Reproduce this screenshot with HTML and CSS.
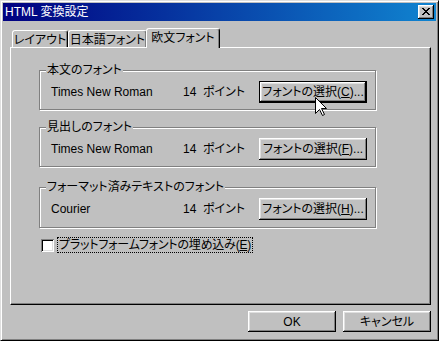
FILE: index.html
```html
<!DOCTYPE html>
<html lang="ja">
<head>
    <meta charset="UTF-8">
    <title>HTML 変換設定</title>
    <link rel="stylesheet" href="styles.css">
</head>
<body>
    <div class="window">
        <div class="titlebar">
            <span class="title">HTML 変換設定</span>
            <button class="close">
                <svg width="8" height="7" viewBox="0 0 8 7" shape-rendering="crispEdges"><path d="M0 0h2v1H0zM6 0h2v1H6zM1 1h2v1H1zM5 1h2v1H5zM2 2h4v1H2zM3 3h2v1H3zM2 4h4v1H2zM1 5h2v1H1zM5 5h2v1H5zM0 6h2v1H0zM6 6h2v1H6z" fill="#000"/></svg>
            </button>
        </div>

        <div class="content">
            <div class="tabs">
                <div class="tab tab-layout">レイアウト</div>
                <div class="tab tab-jp">日本語フォント</div>
                <div class="tab tab-en active">欧文フォント</div>
            </div>

            <div class="panel">
                <div class="group">
                    <span class="legend">本文のフォント</span>
                    <div class="row">
                        <span class="name">Times New Roman</span>
                        <span class="size">14</span>
                        <span class="unit">ポイント</span>
                        <button class="btn select default">フォントの選択(<u>C</u>)...</button>
                    </div>
                </div>

                <div class="group group-2">
                    <span class="legend">見出しのフォント</span>
                    <div class="row">
                        <span class="name">Times New Roman</span>
                        <span class="size">14</span>
                        <span class="unit">ポイント</span>
                        <button class="btn select">フォントの選択(<u>F</u>)...</button>
                    </div>
                </div>

                <div class="group group-3">
                    <span class="legend">フォーマット済みテキストのフォント</span>
                    <div class="row">
                        <span class="name">Courier</span>
                        <span class="size">14</span>
                        <span class="unit">ポイント</span>
                        <button class="btn select">フォントの選択(<u>H</u>)...</button>
                    </div>
                </div>

                <div class="check">
                    <span class="box"></span>
                    <span class="check-label">プラットフォームフォントの埋め込み(<u>E</u>)</span>
                </div>
            </div>

            <div class="actions">
                <button class="btn action">OK</button>
                <button class="btn action">キャンセル</button>
            </div>
        </div>

        <svg class="cursor" width="13" height="20" viewBox="0 0 13 20">
            <path d="M0.5 0.5V16.5L4.5 12.5L7.5 18.5L9.5 17.5L6.5 11.5H11.5Z" fill="#fff" stroke="#000" stroke-width="1"/>
        </svg>
    </div>
</body>
</html>
```

FILE: styles.css
```css
* {
    box-sizing: border-box;
}
body {
    margin: 0;
    background-color: #c0c0c0;
    font-family: "Liberation Sans", "Noto Sans CJK JP", sans-serif;
    font-size: 12px;
    font-feature-settings: "palt";
    color: #000;
}
button {
    font: inherit;
    color: inherit;
    padding: 0;
    border: none;
    background-color: #c0c0c0;
}
.window {
    position: relative;
    width: 439px;
    height: 341px;
    padding: 2px;
    border: 1px solid;
    border-color: #dfdfdf #000 #000 #dfdfdf;
    box-shadow: inset 1px 1px #fff, inset -1px -1px #808080;
    background-color: #c0c0c0;
}
.titlebar {
    height: 18px;
    display: flex;
    align-items: center;
    justify-content: space-between;
    padding: 0 2px 0 2px;
    background: linear-gradient(to right, #000080, #1084d0);
    color: #fff;
}
.title {
    line-height: 14px;
}
.close {
    width: 16px;
    height: 14px;
    display: flex;
    align-items: center;
    justify-content: center;
    padding-bottom: 1px;
    box-shadow: inset -1px -1px #000, inset 1px 1px #fff, inset -2px -2px #808080, inset 2px 2px #dfdfdf;
}
.content {
    padding: 7px 5px 0 7px;
}
.tabs {
    height: 19px;
    display: flex;
    align-items: flex-end;
    padding-left: 2px;
}
.tab {
    height: 17px;
    display: flex;
    align-items: center;
    justify-content: center;
    line-height: 14px;
    padding-top: 2px;
    border: 1px solid;
    border-bottom: none;
    border-color: #fff #000 transparent #fff;
    border-radius: 3px 3px 0 0;
    box-shadow: inset -1px 0 #808080;
    background-color: #c0c0c0;
}
.tab-layout {
    width: 56px;
}
.tab-jp {
    width: 79px;
}
.tab-en {
    width: 74px;
}
.tab.active {
    position: relative;
    z-index: 1;
    height: 20px;
    margin: 0 -2px -1px -1px;
    padding-top: 0;
    padding-bottom: 2px;
}
.panel {
    width: 421px;
    height: 258px;
    padding: 22px 0 0 28px;
    border: 1px solid;
    border-color: #fff #000 #000 #fff;
    box-shadow: inset -1px -1px #808080;
}
.group {
    position: relative;
    width: 337px;
    height: 40px;
    padding: 10px 0 0 11px;
    border: 1px solid #808080;
    box-shadow: 1px 1px #fff, inset 1px 1px #fff;
}
.group-2 {
    margin-top: 17px;
}
.group-3 {
    margin-top: 20px;
    height: 41px;
}
.legend {
    position: absolute;
    top: -8px;
    left: 6px;
    padding: 0 1px;
    line-height: 14px;
    background-color: #c0c0c0;
}
.row {
    display: flex;
    align-items: center;
    line-height: 14px;
}
.name {
    width: 132px;
}
.size {
    width: 20px;
}
.unit {
    width: 56px;
}
.btn {
    display: flex;
    align-items: center;
    justify-content: center;
    line-height: 14px;
    box-shadow: inset -1px -1px #000, inset 1px 1px #fff, inset -2px -2px #808080, inset 2px 2px #dfdfdf;
}
.btn.select {
    width: 108px;
    height: 22px;
}
.btn.default {
    box-shadow: inset 0 0 0 1px #000, inset -2px -2px #000, inset 2px 2px #fff, inset -3px -3px #808080, inset 3px 3px #dfdfdf;
}
.check {
    display: flex;
    align-items: center;
    height: 16px;
    margin-top: 9px;
    padding-left: 2px;
}
.box {
    width: 13px;
    height: 13px;
    background-color: #fff;
    box-shadow: inset 1px 1px #808080, inset -1px -1px #fff, inset 2px 2px #000, inset -2px -2px #dfdfdf;
}
.check-label {
    margin-left: 3px;
    height: 16px;
    padding: 0 1px;
    line-height: 14px;
    letter-spacing: -0.2px;
    border: 1px dotted #000;
}
.actions {
    display: flex;
    justify-content: flex-end;
    gap: 7px;
    margin-top: 6px;
}
.btn.action {
    width: 88px;
    height: 21px;
}
.cursor {
    position: absolute;
    left: 314px;
    top: 96px;
}
```
